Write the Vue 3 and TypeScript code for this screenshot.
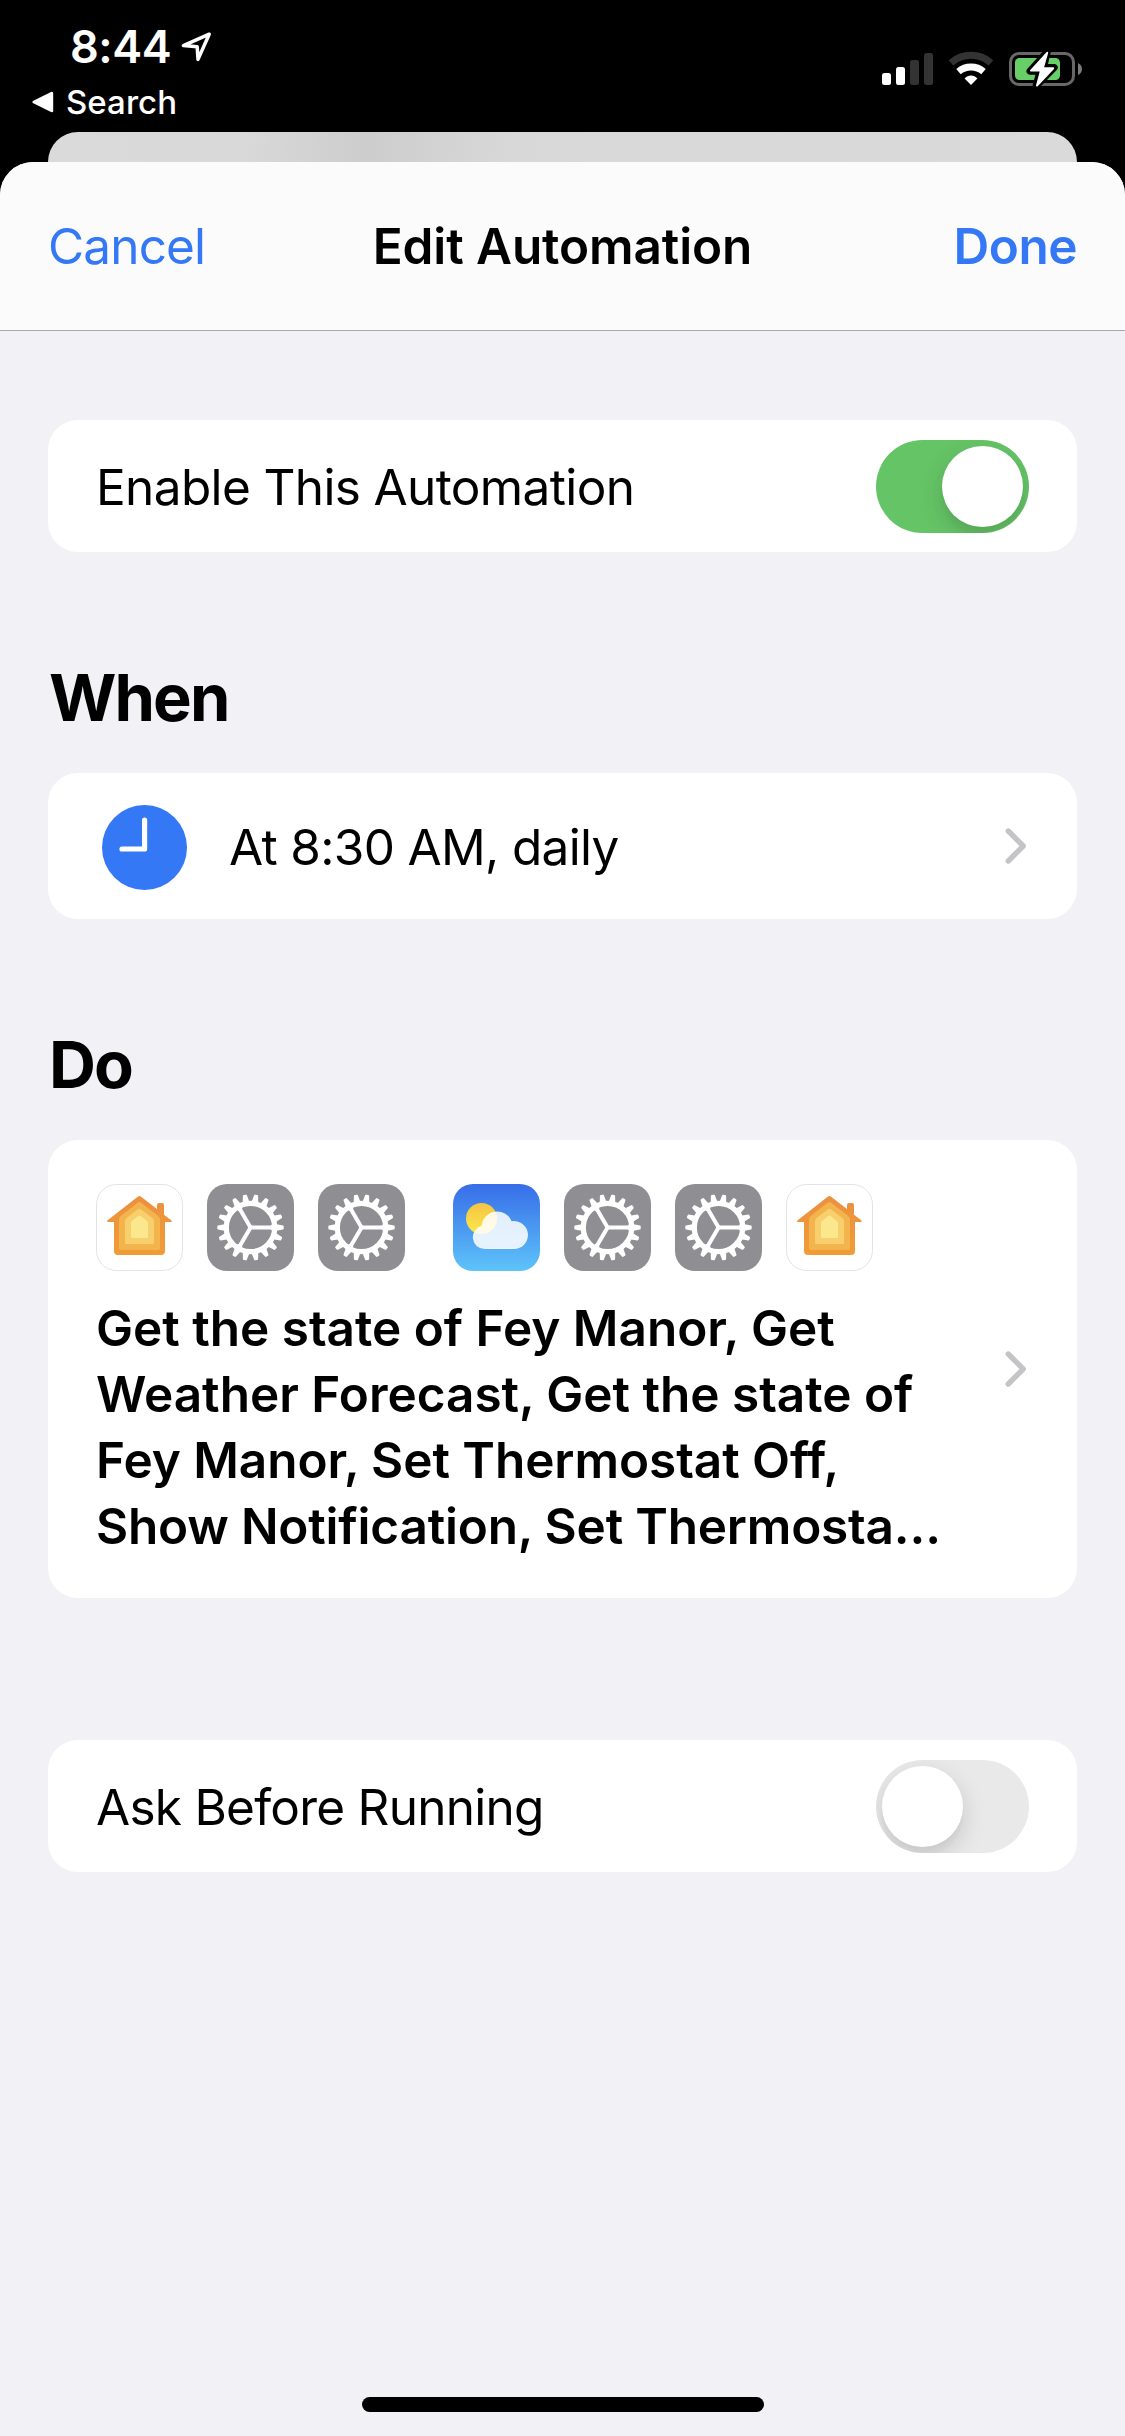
<script setup lang="ts">
import { ref } from 'vue'

type AppIcon = 'home' | 'gear' | 'weather'

const enabled = ref(true)
const askFirst = ref(false)
const iconGroups: AppIcon[][] = [
  ['home', 'gear', 'gear'],
  ['weather', 'gear', 'gear', 'home'],
]
const summary = [
  'Get the state of Fey Manor, Get',
  'Weather Forecast, Get the state of',
  'Fey Manor, Set Thermostat Off,',
  'Show Notification, Set Thermosta…',
]
const teeth = Array.from({ length: 18 }, (_, i) => i * 20)
</script>

<template>
  <div class="phone">
    <header class="status">
      <div class="status-left">
        <div class="time-row">
          <span class="time">8:44</span>
          <svg class="location" width="32" height="32" viewBox="0 0 32 32">
            <path d="M28.2 3.2 2.4 14.6 16.2 15.8 17 28.4Z" fill="none" stroke="#fff" stroke-width="3.5" stroke-linejoin="round" />
          </svg>
        </div>
        <div class="back-row">
          <svg width="22" height="22" viewBox="0 0 22 22">
            <path d="M2 11 19.7 2.4V19.7Z" fill="#fff" stroke="#fff" stroke-width="3" stroke-linejoin="round" />
          </svg>
          <span class="back">Search</span>
        </div>
      </div>
      <svg class="status-icons" width="201" height="38" viewBox="0 0 201 38">
        <rect x="0" y="23" width="9" height="12" rx="2.5" fill="#fff" />
        <rect x="14" y="17" width="9" height="18" rx="2.5" fill="#fff" />
        <rect x="28" y="10" width="9" height="25" rx="2.5" fill="#333" />
        <rect x="42" y="3" width="9" height="32" rx="2.5" fill="#333" />
        <path d="M69 12.8A30.5 30.5 0 0 1 109 12.8" fill="none" stroke="#333" stroke-width="7" />
        <path d="M76.5 21.6A19.5 19.5 0 0 1 101.5 21.6" fill="none" stroke="#fff" stroke-width="7" />
        <path d="M89 35 82.6 28.6C86 24.5 92 24.5 95.4 28.6Z" fill="#fff" />
        <rect x="128.5" y="3.5" width="63" height="31" rx="8.5" fill="none" stroke="#686868" stroke-width="3" />
        <rect x="133" y="8" width="45" height="22" rx="4.5" fill="#68ce67" />
        <path d="M196 13Q200 15 200 19T196 25Z" fill="#7c7c7c" />
        <path d="M165.2 2 148 21.2H158L154 36.2 172.2 17.6H161.6Z" fill="#fff" stroke="#000" stroke-width="7" stroke-linejoin="round" />
        <path d="M165.2 2.8 149 20.6H159L155 35.6 171.2 18.2H160.8Z" fill="#fff" stroke="#fff" stroke-width="2" stroke-linejoin="round" />
      </svg>
    </header>

    <div class="peek"></div>

    <main class="sheet">
      <nav class="nav">
        <button class="nav-btn cancel">Cancel</button>
        <h1 class="title">Edit Automation</h1>
        <button class="nav-btn done">Done</button>
      </nav>

      <section class="card row first">
        <span class="label enable">Enable This Automation</span>
        <button class="toggle" :class="{ on: enabled }" @click="enabled = !enabled"><i class="knob"></i></button>
      </section>

      <h2 class="heading when">When</h2>
      <section class="card row trigger">
        <svg class="clock" width="85" height="85" viewBox="0 0 85 85">
          <circle cx="42.5" cy="42.5" r="42.5" fill="#3478f6" />
          <path d="M42.6 15V44H20" fill="none" stroke="#fff" stroke-width="5.2" stroke-linecap="round" stroke-linejoin="round" />
        </svg>
        <span class="label schedule">At 8:30 AM, daily</span>
        <svg class="chevron" width="22" height="38" viewBox="0 0 22 38">
          <path d="M3.3 4 18.2 19 3.3 34" fill="none" stroke="#c4c4c6" stroke-width="5.4" stroke-linecap="round" stroke-linejoin="round" />
        </svg>
      </section>

      <h2 class="heading do">Do</h2>
      <section class="card actions">
        <div class="actions-body">
          <div class="icons">
            <div v-for="(group, g) in iconGroups" :key="g" class="icon-group">
              <template v-for="(icon, i) in group" :key="i">
                <svg v-if="icon === 'home'" width="87" height="87" viewBox="0 0 87 87">
                  <defs>
                    <linearGradient id="wall" x1="0" y1="0" x2="0" y2="1">
                      <stop offset="0" stop-color="#eb9040" />
                      <stop offset="1" stop-color="#f19c36" />
                    </linearGradient>
                  </defs>
                  <rect x=".5" y=".5" width="86" height="86" rx="20" fill="#fff" stroke="#e3e3e5" />
                  <path d="M42 12.5Q43.4 11.5 44.8 12.5L61 25V21Q61 19 63 19H66Q68 19 68 21V30.8L75.6 36.6Q76.4 38 75 38H69V67Q69 71 65 71H22Q18 71 18 67V38H12Q10.5 38 11.3 36.6Z" fill="url(#wall)" />
                  <path d="M42 18.5Q43.4 17.5 44.8 18.5L62 31.8Q64 33.4 64 36V64Q64 66 62 66H25Q23 66 23 64V36Q23 33.4 25 31.8Z" fill="#f4b44d" />
                  <path d="M42 25.2Q43.4 24.2 44.8 25.2L56.5 34Q58 35.2 58 37.2V58.5Q58 60 56.5 60H30.5Q29 60 29 58.5V37.2Q29 35.2 30.5 34Z" fill="#f7cf6d" />
                  <path d="M42.3 32Q43.5 31 44.7 32L51 37Q52 37.8 52 39V53Q52 54 51 54H36Q35 54 35 53V39Q35 37.8 36 37Z" fill="#fbe88c" />
                </svg>
                <svg v-else-if="icon === 'gear'" width="87" height="87" viewBox="0 0 87 87">
                  <rect width="87" height="87" rx="20" fill="#8e8e93" />
                  <g transform="translate(43.5 43.5)" fill="#fff">
                    <path v-for="a in teeth" :key="a" :transform="`rotate(${a})`" d="M25-3.5 32.4-2Q33.2-1.8 33.2-1V1Q33.2 1.8 32.4 2L25 3.5Z" />
                    <circle r="24.2" fill="none" stroke="#fff" stroke-width="5.2" />
                    <path v-for="a in [0, 120, 240]" :key="'s' + a" :transform="`rotate(${a})`" d="M-1-2H20Q21.5-2.4 22-4V4Q21.5 2.4 20 2H-1Z" />
                    <path d="M3.4 0-1.7 2.95V-2.95Z" stroke="#fff" stroke-width="1" />
                  </g>
                </svg>
                <svg v-else width="87" height="87" viewBox="0 0 87 87">
                  <defs>
                    <linearGradient id="sky" x1="0" y1="0" x2="0" y2="1">
                      <stop offset="0" stop-color="#376de8" />
                      <stop offset="1" stop-color="#5ec4f9" />
                    </linearGradient>
                    <linearGradient id="sun" x1="0" y1="0" x2="0" y2="1">
                      <stop offset="0" stop-color="#f5c344" />
                      <stop offset="1" stop-color="#fce94a" />
                    </linearGradient>
                  </defs>
                  <rect width="87" height="87" rx="20" fill="url(#sky)" />
                  <circle cx="28.5" cy="34.5" r="15.5" fill="url(#sun)" />
                  <path d="M31.8 65A11.8 11.8 0 0 1 28.6 41.8A15.6 15.6 0 0 1 58.6 37.2A14 14 0 1 1 61 65Z" fill="#fff" fill-opacity=".86" />
                </svg>
              </template>
            </div>
          </div>
          <p class="summary">
            <span v-for="(line, i) in summary" :key="i" class="line" :class="'l' + (i + 1)">{{ line }}</span>
          </p>
        </div>
        <svg class="chevron" width="22" height="38" viewBox="0 0 22 38">
          <path d="M3.3 4 18.2 19 3.3 34" fill="none" stroke="#c4c4c6" stroke-width="5.4" stroke-linecap="round" stroke-linejoin="round" />
        </svg>
      </section>

      <section class="card row ask-card">
        <span class="label ask">Ask Before Running</span>
        <button class="toggle" :class="{ on: askFirst }" @click="askFirst = !askFirst"><i class="knob"></i></button>
      </section>

      <div class="home-indicator"></div>
    </main>
  </div>
</template>

<style>
body {
  background: #000;
}
</style>

<style scoped>
.phone {
  display: flex;
  flex-direction: column;
  width: 1125px;
  height: 2436px;
  overflow: hidden;
  background: #000;
  color: #000;
  font-family: Inter, "Liberation Sans", sans-serif;
  font-size: 49.5px;
}
.phone svg {
  display: block;
  flex: none;
}
button {
  border: 0;
  padding: 0;
  background: none;
  font: inherit;
}
.status {
  display: flex;
  justify-content: space-between;
  height: 132px;
  color: #fff;
}
.time-row {
  display: flex;
  align-items: center;
  height: 64px;
  padding: 15px 0 0 70px;
}
.time {
  width: 111px;
  font-size: 45px;
  font-weight: 600;
  letter-spacing: -0.5px;
  line-height: 64px;
}
.back-row {
  display: flex;
  align-items: center;
  gap: 12px;
  height: 46px;
  padding-left: 32px;
}
.back {
  font-size: 33px;
  font-weight: 500;
  letter-spacing: 0.05px;
  line-height: 46px;
}
.status-icons {
  margin: 50px 42px 0 0;
}
.peek {
  flex: none;
  height: 30px;
  margin: 0 48px;
  border-radius: 30px 30px 0 0;
  background: linear-gradient(97deg, #dadada 0, #d9d9d9 19%, #cdcdcd 31%, #d8d8d8 45%, #dadada 100%);
}
.sheet {
  display: flex;
  flex: 1;
  flex-direction: column;
  border-radius: 33px 33px 0 0;
  overflow: hidden;
  background: #f2f1f6;
}
.nav {
  display: grid;
  grid-template-columns: 1fr auto 1fr;
  align-items: center;
  box-sizing: border-box;
  height: 169px;
  padding: 0 48px;
  border-bottom: 1px solid #a9a9ad;
  background: #fbfbfc;
}
.nav-btn {
  color: #3478f6;
  white-space: nowrap;
}
.cancel {
  justify-self: start;
  letter-spacing: -0.85px;
}
.title {
  margin: 0;
  font-size: 49.5px;
  font-weight: 600;
  letter-spacing: -0.1px;
  white-space: nowrap;
}
.done {
  justify-self: end;
  font-weight: 600;
  letter-spacing: -0.5px;
}
.card {
  display: flex;
  flex: none;
  align-items: center;
  box-sizing: border-box;
  margin: 0 48px;
  padding: 0 48px;
  border-radius: 30px;
  background: #fff;
}
.row {
  height: 132px;
}
.first {
  margin-top: 89px;
}
.label {
  flex: 1;
  padding-top: 2px;
  white-space: nowrap;
}
.enable {
  letter-spacing: -0.63px;
}
.schedule {
  letter-spacing: -0.67px;
}
.ask {
  letter-spacing: -0.74px;
}
.toggle {
  width: 153px;
  height: 93px;
  padding: 6px;
  border-radius: 47px;
  overflow: hidden;
  background: #e9e9ea;
}
.toggle.on {
  background: #65c466;
}
.knob {
  display: block;
  width: 81px;
  height: 81px;
  border-radius: 50%;
  background: #fff;
  box-shadow: 0 9px 24px rgba(0, 0, 0, 0.15), 0 9px 3px rgba(0, 0, 0, 0.02);
}
.on .knob {
  margin-left: 60px;
}
.heading {
  margin: 0 48px;
  font-size: 65px;
  font-weight: 700;
  letter-spacing: -1.9px;
  line-height: 80px;
}
.when {
  padding: 106px 0 35px 1px;
}
.trigger {
  height: 146px;
  padding-left: 54px;
}
.clock {
  margin: 3px 42px 0 0;
}
.chevron {
  margin-right: 2px;
}
.do {
  padding: 106px 0 35px 1px;
}
.actions {
  height: 458px;
}
.actions-body {
  flex: 1;
  align-self: flex-start;
  padding-top: 44px;
}
.icons {
  display: flex;
  gap: 48px;
}
.icon-group {
  display: flex;
  gap: 24px;
}
.summary {
  display: flex;
  flex-direction: column;
  margin: 24px 0 0;
  font-weight: 600;
  line-height: 66px;
}
.line {
  letter-spacing: -0.02px;
  white-space: nowrap;
}
.l3 {
  letter-spacing: -0.06px;
}
.l4 {
  letter-spacing: -0.2px;
}
.ask-card {
  margin-top: 142px;
}
.home-indicator {
  width: 402px;
  height: 15px;
  margin: auto auto 24px;
  border-radius: 8px;
  background: #000;
}
</style>
